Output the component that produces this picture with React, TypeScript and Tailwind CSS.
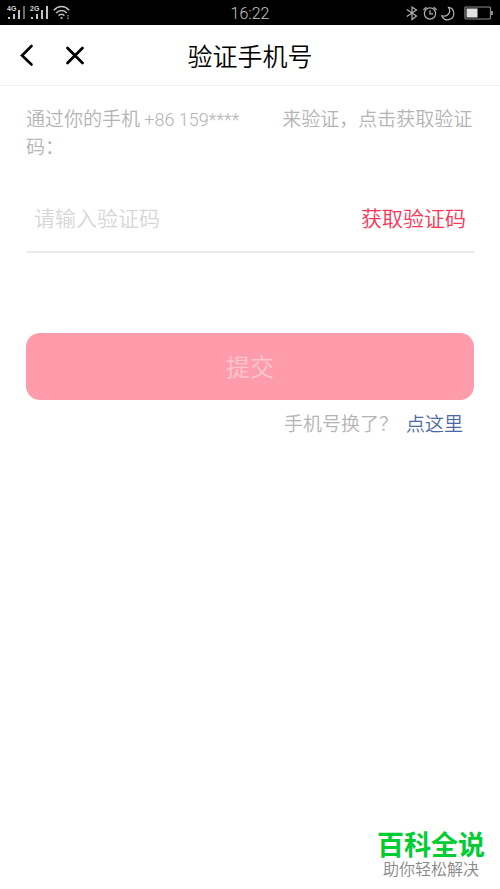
import React, { useState } from "react";

function SignalIcon({ label, dim }: { label: string; dim?: boolean }) {
  return (
    <svg width="20" height="15" viewBox="0 0 20 15" fill="#c4c4c4" aria-hidden="true">
      <text x="0" y="6" fontSize="7" fontWeight="700" fontFamily="Liberation Sans, sans-serif" fill="#d4d4d4">
        {label}
      </text>
      <rect x="1" y="12" width="2" height="2" />
      <rect x="6" y="9" width="2" height="5" />
      <rect x="11" y="5" width="2" height="9" />
      <rect x="16" y="1" width="2" height="13" fill={dim ? "#6b6b6b" : "#c4c4c4"} />
    </svg>
  );
}

function WifiIcon() {
  return (
    <svg width="18" height="15" viewBox="0 0 18 15" fill="none" stroke="#c4c4c4" strokeWidth="1.5" aria-hidden="true">
      <path d="M.8 5.2C5.4.4 11.6.4 16.2 5.2" />
      <path d="M3.2 8c3.2-3.3 7.4-3.3 10.6 0" />
      <path d="M5.6 10.6c1.8-1.8 4-1.8 5.8 0" />
      <circle cx="8.5" cy="13" r="1.1" fill="#c4c4c4" stroke="none" />
      <path d="M15 10v1.5M15 12.5V14" stroke="#8a8a8a" />
    </svg>
  );
}

function StatusBar() {
  return (
    <div className="grid h-[25px] grid-cols-3 items-center bg-black px-[7px] text-[#c4c4c4]">
      <div className="flex items-center gap-[3px]">
        <SignalIcon label="4G" dim />
        <SignalIcon label="2G" />
        <WifiIcon />
      </div>
      <span className="pt-[3px] text-center font-[Roboto,sans-serif] text-[16px] leading-[22px]">16:22</span>
      <div className="flex items-center justify-end">
        <svg width="87" height="16" viewBox="0 0 87 16" fill="none" stroke="#b4b4b4" strokeWidth="1.2" aria-hidden="true">
          <path d="M.8 4.5l9.7 6.5L6 14.5V2l4.5 3L.8 11.5" />
          <circle cx="24" cy="8.5" r="5.6" />
          <path d="M24 5.3v3.6h3M17.4 4.8l3-2.6M30.6 4.8l-3-2.6" />
          <path d="M42.6 2.4a6.2 6.2 0 1 1-6.8 8.3c2.5.8 5.2.3 6.6-1.5 1.5-1.9 1.5-4.6.2-6.8z" />
          <rect x="59" y="2" width="25.5" height="12" rx="1" stroke="#8c8c8c" />
          <rect x="60.5" y="3.5" width="11" height="9" fill="#e2e2e2" stroke="none" />
          <rect x="85" y="6" width="2" height="4" fill="#8c8c8c" stroke="none" />
        </svg>
      </div>
    </div>
  );
}

export default function App() {
  const [code, setCode] = useState("");

  return (
    <div className="flex min-h-screen flex-col bg-white font-['Noto_Sans_CJK_SC',sans-serif] font-[350]">
      <StatusBar />

      <header className="grid h-[61px] grid-cols-[1fr_auto_1fr] items-center border-b border-[#f0f0f0] px-[16px]">
        <div className="flex items-center gap-[24px]">
          <button type="button" aria-label="返回">
            <svg width="24" height="24" viewBox="0 0 24 24" fill="none" stroke="#000" strokeWidth="2.6" strokeLinecap="round">
              <path d="M15.5 3L6 12.5l9.5 9" />
            </svg>
          </button>
          <button type="button" aria-label="关闭">
            <svg width="24" height="24" viewBox="0 0 24 24" fill="none" stroke="#000" strokeWidth="2.8" strokeLinecap="round">
              <path d="M3.5 5l15 15M18.5 5l-15 15" />
            </svg>
          </button>
        </div>
        <h1 className="text-[25px] leading-[36px] font-[350] text-black">验证手机号</h1>
      </header>

      <main className="px-[26px] pt-[18px]">
        <p className="text-[19px] leading-[28px] text-[#b4b4b4]">
          通过你的手机{" "}
          <span className="mr-[43px] font-[Roboto,sans-serif] text-[18px] leading-none">+86 159****</span>
          来验证，点击获取验证码：
        </p>

        <form onSubmit={(e) => e.preventDefault()}>
          <div className="mt-[25px] flex h-[68px] items-center justify-between border-b-2 border-[#ebebeb] px-[8px] pb-[2px]">
            <input
              type="text"
              aria-label="验证码"
              placeholder="请输入验证码"
              value={code}
              onChange={(e) => setCode(e.target.value)}
              className="min-w-0 flex-1 text-[21px] leading-[30px] text-black outline-none placeholder:text-[#d6d6d6]"
            />
            <button type="button" className="text-[21px] leading-[30px] text-[#fe3355]">
              获取验证码
            </button>
          </div>

          <button
            type="submit"
            className="mt-[80px] h-[67px] w-full rounded-[14px] bg-[#ff9cab] pb-[2px] text-[24px] leading-[36px] text-[#ffc8d0]"
          >
            提交
          </button>
        </form>

        <div className="mt-[8px] flex justify-end gap-[8px] pr-[11px] text-[19px] leading-[30px]">
          <span className="text-[#b4b4b4]">手机号换了？</span>
          <a href="#" className="text-[#4a69a8]">
            点这里
          </a>
        </div>
      </main>

      <footer className="mt-auto flex flex-col items-center self-end pr-[15px] pb-[11px]">
        <span className="text-[27px] leading-[28px] font-bold text-[#00cc33]">百科全说</span>
        <span className="text-[16px] leading-[20px] text-[#888888]">助你轻松解决</span>
      </footer>
    </div>
  );
}
